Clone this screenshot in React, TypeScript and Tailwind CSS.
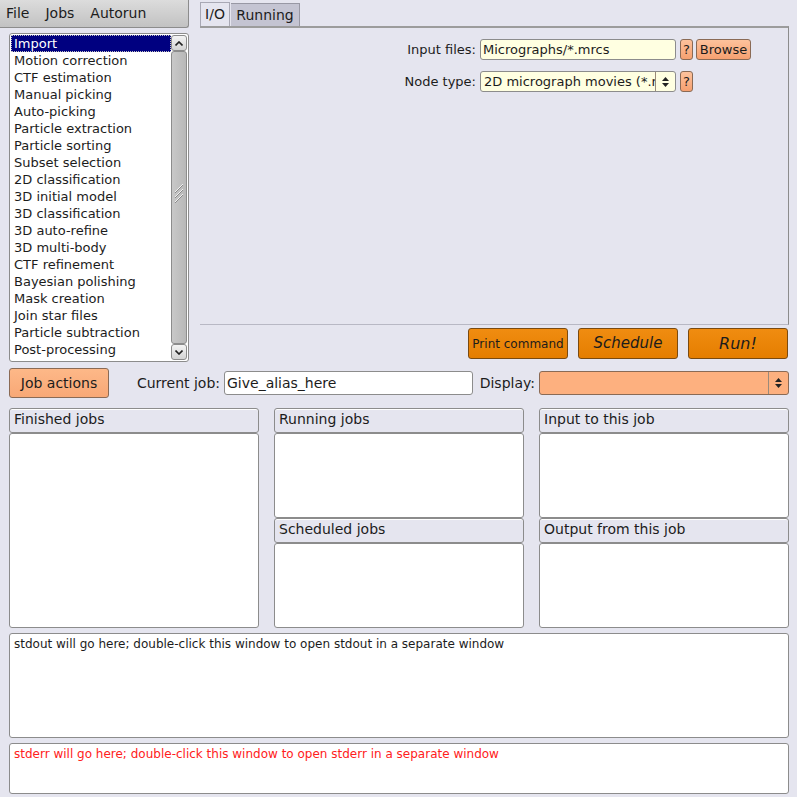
import React from 'react';

const jobTypes = [
  'Import',
  'Motion correction',
  'CTF estimation',
  'Manual picking',
  'Auto-picking',
  'Particle extraction',
  'Particle sorting',
  'Subset selection',
  '2D classification',
  '3D initial model',
  '3D classification',
  '3D auto-refine',
  '3D multi-body',
  'CTF refinement',
  'Bayesian polishing',
  'Mask creation',
  'Join star files',
  'Particle subtraction',
  'Post-processing',
];

function Spinner() {
  return (
    <div className="flex h-full items-center border-l border-[#9a8a7a] px-[5px]">
      <svg width="9" height="12" viewBox="0 0 9 12">
        <path d="M1 5 L4.5 1 L8 5 Z" fill="#222" />
        <path d="M1 7 L4.5 11 L8 7 Z" fill="#222" />
      </svg>
    </div>
  );
}

function Help() {
  return (
    <div className="ml-[4px] flex h-[21px] w-[13px] items-center justify-center rounded-[3px] border border-[#8a6a55] bg-gradient-to-b from-[#fdc29c] to-[#f5a070] text-[13px] leading-none">
      ?
    </div>
  );
}

function PanelHeader({ title }: { title: string }) {
  return (
    <div className="flex h-[25px] items-center rounded-[3px] border border-[#8c8c8c] bg-[#e5e5ef] px-[4px] pb-[2px] text-[14px] shadow-[inset_0_1px_0_#ffffff]">
      {title}
    </div>
  );
}

function WhiteBox({ className }: { className: string }) {
  return <div className={`rounded-[3px] border border-[#8c8c8c] bg-white ${className}`} />;
}

export default function App() {
  return (
    <div className="h-[797px] w-[797px] overflow-hidden bg-[#e5e5ef] font-['DejaVu_Sans',sans-serif] text-[#1c1c1c]">
      {/* top section */}
      <div className="flex h-[362px]">
        <div className="flex w-[200px] flex-col">
          <div className="flex h-[28px] w-[189px] items-center gap-[16px] rounded-br-[3px] border-r border-b border-[#8c8c8c] bg-gradient-to-b from-[#dcdcdc] to-[#c2c2c2] px-[6px] text-[14px]">
            <span>File</span>
            <span>Jobs</span>
            <span>Autorun</span>
          </div>
          <div className="ml-[9px] mt-[5px] flex h-[329px] w-[180px] rounded-[3px] border border-[#8c8c8c] bg-white p-[1px]">
            <div className="flex-1 text-[13px]">
              {jobTypes.map((t, i) => (
                <div
                  key={t}
                  className={
                    i === 0
                      ? 'h-[17px] bg-[#000080] pl-[3px] leading-[17px] text-white outline-1 outline-dotted outline-[#c0c0c0] -outline-offset-1'
                      : 'h-[17px] pl-[3px] leading-[17px]'
                  }
                >
                  {t}
                </div>
              ))}
            </div>
            <div className="flex w-[16px] flex-col">
              <div className="flex h-[16px] items-center justify-center rounded-[3px] border border-[#8c8c8c] bg-gradient-to-b from-[#f4f4f4] to-[#d4d4d4]">
                <svg width="8" height="5" viewBox="0 0 8 5">
                  <path d="M0.5 4.5 L4 1 L7.5 4.5" fill="none" stroke="#222" strokeWidth="1.6" />
                </svg>
              </div>
              <div className="relative flex-1 rounded-[3px] border border-[#8c8c8c] bg-gradient-to-r from-[#c8c8c8] to-[#b8b8b8]">
                <svg className="absolute left-[2px] top-[130px]" width="10" height="22" viewBox="0 0 10 22">
                  <path d="M9 2 L1 10 M9 7 L1 15 M9 12 L1 20" stroke="#f0f0f0" strokeWidth="1" />
                  <path d="M9 3 L1 11 M9 8 L1 16 M9 13 L1 21" stroke="#8a8a8a" strokeWidth="1" />
                </svg>
              </div>
              <div className="flex h-[16px] items-center justify-center rounded-[3px] border border-[#8c8c8c] bg-gradient-to-b from-[#f4f4f4] to-[#d4d4d4]">
                <svg width="8" height="5" viewBox="0 0 8 5">
                  <path d="M0.5 0.5 L4 4 L7.5 0.5" fill="none" stroke="#222" strokeWidth="1.6" />
                </svg>
              </div>
            </div>
          </div>
        </div>

        <div className="flex w-[589px] flex-col">
          {/* tabs */}
          <div className="flex h-[26px] items-end pt-[2px] text-[14px]">
            <div className="flex h-[24px] w-[30px] items-center justify-center border-l border-t border-r border-[#a8a8b4] bg-[#e5e5ef]">
              I/O
            </div>
            <div className="ml-[1px] flex h-[23px] w-[69px] items-center justify-center border-t border-r border-[#9898a4] bg-[#c4c4d2]">
              Running
            </div>
          </div>
          <div className="h-[299px] border-t-[2px] border-r border-b border-t-[#9c9c9c] border-r-[#8c8c8c] border-b-[#b8b8c4] bg-[#e5e5ef]">
            <div className="mt-[11px] flex h-[21px] items-center text-[13px]">
              <div className="w-[276px] text-right">Input files:</div>
              <div className="ml-[4px] flex h-[21px] w-[196px] items-center rounded-[3px] border border-[#8c8c8c] bg-[#ffffe1] pl-[2px]">
                Micrographs/*.mrcs
              </div>
              <Help />
              <div className="ml-[3px] flex h-[21px] w-[55px] items-center justify-center rounded-[3px] border border-[#8a6a55] bg-gradient-to-b from-[#fdc29c] to-[#f5a070]">
                Browse
              </div>
            </div>
            <div className="mt-[11px] flex h-[21px] items-center text-[13px]">
              <div className="w-[276px] text-right">Node type:</div>
              <div className="ml-[4px] flex h-[21px] w-[196px] items-center overflow-hidden rounded-[3px] border border-[#8c8c8c] bg-[#ffffe1]">
                <div className="min-w-0 flex-1 overflow-hidden whitespace-nowrap pl-[3px]">2D micrograph movies (*.mrcs)</div>
                <Spinner />
              </div>
              <Help />
            </div>
          </div>
          <div className="mt-[3px] flex justify-end gap-[10px] pr-[1px]">
            <div className="flex h-[31px] w-[100px] items-center justify-center rounded-[3px] border border-[#7a4a10] bg-gradient-to-b from-[#f08c10] to-[#e57e00] text-[12px]">
              Print command
            </div>
            <div className="flex h-[31px] w-[100px] items-center justify-center rounded-[3px] border border-[#7a4a10] bg-gradient-to-b from-[#f08c10] to-[#e57e00] text-[15px] italic">
              Schedule
            </div>
            <div className="flex h-[31px] w-[100px] items-center justify-center rounded-[3px] border border-[#7a4a10] bg-gradient-to-b from-[#f08c10] to-[#e57e00] text-[16px] italic">
              Run!
            </div>
          </div>
        </div>
      </div>

      {/* current job row */}
      <div className="mt-[6px] flex h-[30px] items-center text-[14px]">
        <div className="ml-[9px] flex h-[30px] w-[100px] items-center justify-center rounded-[3px] border border-[#8a6a55] bg-gradient-to-b from-[#fdb888] to-[#f8a876]">
          Job actions
        </div>
        <div className="w-[111px] text-right">Current job:</div>
        <div className="ml-[4px] flex h-[24px] w-[249px] items-center rounded-[3px] border border-[#8c8c8c] bg-white pl-[2px]">
          Give_alias_here
        </div>
        <div className="w-[62px] text-right">Display:</div>
        <div className="ml-[4px] flex h-[24px] w-[250px] items-center justify-end overflow-hidden rounded-[3px] border border-[#8a6a55] bg-[#fdb07f]">
          <Spinner />
        </div>
      </div>

      {/* job lists */}
      <div className="ml-[9px] mt-[10px] flex h-[220px] gap-[15px]">
        <div className="flex w-[250px] flex-col">
          <PanelHeader title="Finished jobs" />
          <WhiteBox className="h-[195px]" />
        </div>
        <div className="flex w-[250px] flex-col">
          <PanelHeader title="Running jobs" />
          <WhiteBox className="h-[85px]" />
          <PanelHeader title="Scheduled jobs" />
          <WhiteBox className="h-[85px]" />
        </div>
        <div className="flex w-[250px] flex-col">
          <PanelHeader title="Input to this job" />
          <WhiteBox className="h-[85px]" />
          <PanelHeader title="Output from this job" />
          <WhiteBox className="h-[85px]" />
        </div>
      </div>

      {/* stdout / stderr */}
      <div className="ml-[9px] mt-[5px] h-[105px] w-[780px] rounded-[3px] border border-[#8c8c8c] bg-white px-[4px] pt-[1px] text-[12px]">
        stdout will go here; double-click this window to open stdout in a separate window
      </div>
      <div className="ml-[9px] mt-[5px] h-[51px] w-[780px] rounded-[3px] border border-[#8c8c8c] bg-white px-[4px] pt-[1px] text-[12px] text-[#ff2020]">
        stderr will go here; double-click this window to open stderr in a separate window
      </div>
    </div>
  );
}
